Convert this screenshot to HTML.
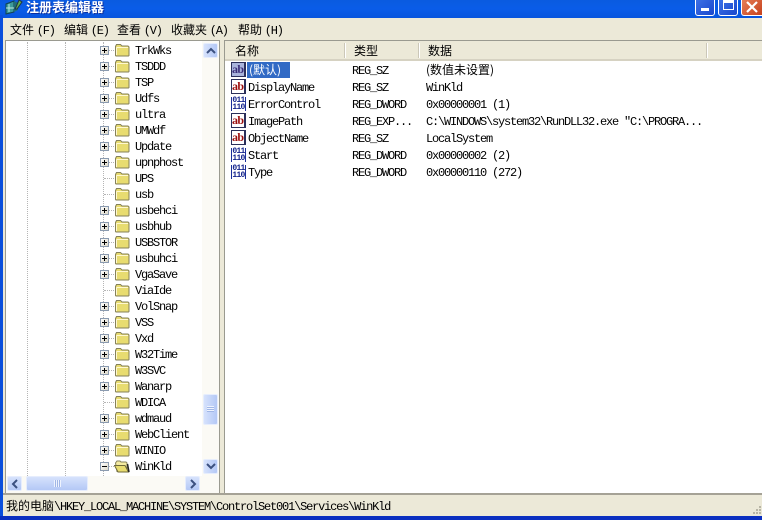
<!DOCTYPE html>
<html><head><meta charset="utf-8"><style>
html,body{margin:0;padding:0;width:762px;height:520px;overflow:hidden;background:#ece9d8}
body{position:relative;font-family:"Liberation Mono","Noto Sans CJK SC",monospace;font-size:12px;color:#000}
.a{position:absolute}
.t{position:absolute;white-space:pre;letter-spacing:-1.2px;line-height:14px;height:14px;transform:translateY(1px);font-size:12px}
.c{position:absolute;white-space:pre;font-family:"Noto Sans CJK SC",sans-serif;font-size:12px;line-height:16px}
.m{position:absolute;top:22px;white-space:pre;font-family:"Noto Sans CJK SC",sans-serif;font-size:12px;line-height:16px}
.m span{font-family:"Liberation Mono",monospace;font-size:12px;letter-spacing:-1.2px}
.p{position:absolute;left:100px;width:7px;height:7px;border:1px solid #8b9bb0;background:linear-gradient(135deg,#fff,#dcd8c8)}
.p:before{content:"";position:absolute;left:1px;top:3px;width:5px;height:1px;background:#000}
.p.x:after{content:"";position:absolute;left:3px;top:1px;width:1px;height:5px;background:#000}
.d{position:absolute;border-top:1px dotted #b5b5b5;height:0}
.v{position:absolute;border-left:1px dotted #b5b5b5;width:0}
.sb{position:absolute;border-radius:2px;background:linear-gradient(90deg,#d6e2fc,#b4c8f6);border:1px solid #e6edfd;box-sizing:border-box}
.sh{position:absolute;border-radius:2px;background:linear-gradient(#d6e2fc,#b4c8f6);border:1px solid #e6edfd;box-sizing:border-box}
.ab{position:absolute;left:231px;width:12px;height:13px;border:1px solid #2a2f5a;border-right-width:2px;background:#fff}
.ab b{position:absolute;left:0;top:0;font:bold 12px/12px "Liberation Serif",serif;color:#9c0f0f;letter-spacing:-.6px}
.bi{position:absolute;left:231px;width:13px;height:14px;background:#fff;border-left:1px solid #1b2f9a;border-right:1px solid #1b2f9a}
.bi b{position:absolute;left:0;width:13px;text-align:center;font:bold 8px/7px "Liberation Mono",monospace;color:#14248c;letter-spacing:-.7px}
</style></head><body>
<svg width="0" height="0" style="position:absolute"><defs>
<symbol id="f" viewBox="0 0 16 14"><path d="M1.5 3.5 L2.5 1.5 H6.5 L8 3 H14 L15 4 V12.5 L14.5 13 H2 L1.5 12.5 Z" fill="#e8dc70" stroke="#85815a"/><path d="M2.5 4.5 H14 M2.5 4.5 V12" fill="none" stroke="#fff8d0"/></symbol>
<symbol id="o" viewBox="0 0 16 14"><path d="M1.5 4 L3 2 H6 L7 3 H12 L13 4 V12.5 H3 Z" fill="#f4eaa0" stroke="#85815a"/><path d="M0.5 6.5 H11 L14.5 13 H4 Z" fill="#e8dc70" stroke="#6f6a3a"/><path d="M13.5 5 L15 13" stroke="#222" stroke-width="1.5"/></symbol>
</defs></svg>

<!-- title bar -->
<div class="a" style="left:0;top:0;width:762px;height:18px;background:linear-gradient(#0a5be0,#0a5ce8 50%,#0855dd)"></div>
<svg class="a" style="left:5px;top:0" width="18" height="15" viewBox="0 0 18 15"><path d="M1 4 L9 1 V12 L1 14 Z" fill="#3d9a9a" stroke="#12424f"/><path d="M9 1 L13 3 V10 L9 12 Z" fill="#1f6d78"/><path d="M4 4 V12 M1 8 H9" stroke="#bfe8e0"/><path d="M14 0 L17 2 L12 9 L10 9 L11 7 Z" fill="#5fb04f" stroke="#234"/></svg>
<div class="a" style="left:26px;top:-2px;font:bold 13px/18px 'Noto Sans CJK SC',sans-serif;color:#fff;text-shadow:1px 1px 0 #0a2fa0;white-space:pre">注册表编辑器</div>
<div class="a" style="left:695px;top:-4px;width:20px;height:20px;border:1px solid #fff;border-radius:3px;box-sizing:border-box;background:linear-gradient(135deg,#3f74e8,#1a47cc)"><div class="a" style="left:5px;top:11px;width:8px;height:3px;background:#fff"></div></div>
<div class="a" style="left:718px;top:-4px;width:20px;height:20px;border:1px solid #fff;border-radius:3px;box-sizing:border-box;background:linear-gradient(135deg,#3f74e8,#1a47cc)"><div class="a" style="left:4px;top:3px;width:11px;height:10px;border:1px solid #fff;border-top-width:3px;box-sizing:border-box"></div></div>
<div class="a" style="left:741px;top:-4px;width:21px;height:20px;border:1px solid #fff;border-right:0;border-radius:3px 0 0 3px;box-sizing:border-box;background:linear-gradient(135deg,#e8835c,#c6411c)"><svg class="a" style="left:4px;top:4px" width="12" height="12" viewBox="0 0 12 12"><path d="M1 1 L11 11 M11 1 L1 11" stroke="#fff" stroke-width="2.2"/></svg></div>

<!-- frame -->
<div class="a" style="left:0;top:15px;width:3px;height:505px;background:#0a4fdc"></div>
<div class="a" style="left:0;top:516px;width:762px;height:4px;background:#0a2fc0"></div>

<!-- menu -->
<div class="m" style="left:10px">文件 <span>(F)</span></div>
<div class="m" style="left:64px">编辑 <span>(E)</span></div>
<div class="m" style="left:117px">查看 <span>(V)</span></div>
<div class="m" style="left:171px">收藏夹 <span>(A)</span></div>
<div class="m" style="left:238px">帮助 <span>(H)</span></div>

<!-- tree panel -->
<div class="a" style="left:5px;top:40px;width:215px;height:454px;background:#fff;border:1px solid #9a9a90;box-sizing:border-box"></div>
<div class="v" style="left:27px;top:42px;height:434px"></div>
<div class="v" style="left:65px;top:42px;height:434px"></div>
<div class="v" style="left:103px;top:42px;height:434px"></div>

<div class="d" style="left:104px;top:50px;width:10px"></div><div class="p x" style="top:46px"></div><svg class="a" style="left:114px;top:43px" width="16" height="14"><use href="#f"/></svg><div class="t" style="left:135px;top:43px">TrkWks</div>
<div class="d" style="left:104px;top:66px;width:10px"></div><div class="p x" style="top:62px"></div><svg class="a" style="left:114px;top:59px" width="16" height="14"><use href="#f"/></svg><div class="t" style="left:135px;top:59px">TSDDD</div>
<div class="d" style="left:104px;top:82px;width:10px"></div><div class="p x" style="top:78px"></div><svg class="a" style="left:114px;top:75px" width="16" height="14"><use href="#f"/></svg><div class="t" style="left:135px;top:75px">TSP</div>
<div class="d" style="left:104px;top:98px;width:10px"></div><div class="p x" style="top:94px"></div><svg class="a" style="left:114px;top:91px" width="16" height="14"><use href="#f"/></svg><div class="t" style="left:135px;top:91px">Udfs</div>
<div class="d" style="left:104px;top:114px;width:10px"></div><div class="p x" style="top:110px"></div><svg class="a" style="left:114px;top:107px" width="16" height="14"><use href="#f"/></svg><div class="t" style="left:135px;top:107px">ultra</div>
<div class="d" style="left:104px;top:130px;width:10px"></div><div class="p x" style="top:126px"></div><svg class="a" style="left:114px;top:123px" width="16" height="14"><use href="#f"/></svg><div class="t" style="left:135px;top:123px">UMWdf</div>
<div class="d" style="left:104px;top:146px;width:10px"></div><div class="p x" style="top:142px"></div><svg class="a" style="left:114px;top:139px" width="16" height="14"><use href="#f"/></svg><div class="t" style="left:135px;top:139px">Update</div>
<div class="d" style="left:104px;top:162px;width:10px"></div><div class="p x" style="top:158px"></div><svg class="a" style="left:114px;top:155px" width="16" height="14"><use href="#f"/></svg><div class="t" style="left:135px;top:155px">upnphost</div>
<div class="d" style="left:104px;top:178px;width:10px"></div><svg class="a" style="left:114px;top:171px" width="16" height="14"><use href="#f"/></svg><div class="t" style="left:135px;top:171px">UPS</div>
<div class="d" style="left:104px;top:194px;width:10px"></div><svg class="a" style="left:114px;top:187px" width="16" height="14"><use href="#f"/></svg><div class="t" style="left:135px;top:187px">usb</div>
<div class="d" style="left:104px;top:210px;width:10px"></div><div class="p x" style="top:206px"></div><svg class="a" style="left:114px;top:203px" width="16" height="14"><use href="#f"/></svg><div class="t" style="left:135px;top:203px">usbehci</div>
<div class="d" style="left:104px;top:226px;width:10px"></div><div class="p x" style="top:222px"></div><svg class="a" style="left:114px;top:219px" width="16" height="14"><use href="#f"/></svg><div class="t" style="left:135px;top:219px">usbhub</div>
<div class="d" style="left:104px;top:242px;width:10px"></div><div class="p x" style="top:238px"></div><svg class="a" style="left:114px;top:235px" width="16" height="14"><use href="#f"/></svg><div class="t" style="left:135px;top:235px">USBSTOR</div>
<div class="d" style="left:104px;top:258px;width:10px"></div><div class="p x" style="top:254px"></div><svg class="a" style="left:114px;top:251px" width="16" height="14"><use href="#f"/></svg><div class="t" style="left:135px;top:251px">usbuhci</div>
<div class="d" style="left:104px;top:274px;width:10px"></div><div class="p x" style="top:270px"></div><svg class="a" style="left:114px;top:267px" width="16" height="14"><use href="#f"/></svg><div class="t" style="left:135px;top:267px">VgaSave</div>
<div class="d" style="left:104px;top:290px;width:10px"></div><svg class="a" style="left:114px;top:283px" width="16" height="14"><use href="#f"/></svg><div class="t" style="left:135px;top:283px">ViaIde</div>
<div class="d" style="left:104px;top:306px;width:10px"></div><div class="p x" style="top:302px"></div><svg class="a" style="left:114px;top:299px" width="16" height="14"><use href="#f"/></svg><div class="t" style="left:135px;top:299px">VolSnap</div>
<div class="d" style="left:104px;top:322px;width:10px"></div><div class="p x" style="top:318px"></div><svg class="a" style="left:114px;top:315px" width="16" height="14"><use href="#f"/></svg><div class="t" style="left:135px;top:315px">VSS</div>
<div class="d" style="left:104px;top:338px;width:10px"></div><div class="p x" style="top:334px"></div><svg class="a" style="left:114px;top:331px" width="16" height="14"><use href="#f"/></svg><div class="t" style="left:135px;top:331px">Vxd</div>
<div class="d" style="left:104px;top:354px;width:10px"></div><div class="p x" style="top:350px"></div><svg class="a" style="left:114px;top:347px" width="16" height="14"><use href="#f"/></svg><div class="t" style="left:135px;top:347px">W32Time</div>
<div class="d" style="left:104px;top:370px;width:10px"></div><div class="p x" style="top:366px"></div><svg class="a" style="left:114px;top:363px" width="16" height="14"><use href="#f"/></svg><div class="t" style="left:135px;top:363px">W3SVC</div>
<div class="d" style="left:104px;top:386px;width:10px"></div><div class="p x" style="top:382px"></div><svg class="a" style="left:114px;top:379px" width="16" height="14"><use href="#f"/></svg><div class="t" style="left:135px;top:379px">Wanarp</div>
<div class="d" style="left:104px;top:402px;width:10px"></div><svg class="a" style="left:114px;top:395px" width="16" height="14"><use href="#f"/></svg><div class="t" style="left:135px;top:395px">WDICA</div>
<div class="d" style="left:104px;top:418px;width:10px"></div><div class="p x" style="top:414px"></div><svg class="a" style="left:114px;top:411px" width="16" height="14"><use href="#f"/></svg><div class="t" style="left:135px;top:411px">wdmaud</div>
<div class="d" style="left:104px;top:434px;width:10px"></div><div class="p x" style="top:430px"></div><svg class="a" style="left:114px;top:427px" width="16" height="14"><use href="#f"/></svg><div class="t" style="left:135px;top:427px">WebClient</div>
<div class="d" style="left:104px;top:450px;width:10px"></div><div class="p x" style="top:446px"></div><svg class="a" style="left:114px;top:443px" width="16" height="14"><use href="#f"/></svg><div class="t" style="left:135px;top:443px">WINIO</div>
<div class="d" style="left:104px;top:466px;width:10px"></div><div class="p" style="top:462px"></div><svg class="a" style="left:114px;top:459px" width="16" height="14"><use href="#o"/></svg><div class="t" style="left:135px;top:459px">WinKld</div>

<!-- vertical scrollbar -->
<div class="a" style="left:202px;top:41px;width:17px;height:435px;background:#fbfaf5"></div>
<div class="sb" style="left:203px;top:43px;width:15px;height:15px"><svg class="a" style="left:2px;top:3px" width="10" height="7"><path d="M1 6 L5 2 L9 6" fill="none" stroke="#3c5180" stroke-width="2"/></svg></div>
<div class="sb" style="left:203px;top:394px;width:15px;height:31px"><div class="a" style="left:3px;top:11px;width:7px;height:6px;background:repeating-linear-gradient(#eef3fe 0 1px,#a0b6e6 1px 2px)"></div></div>
<div class="sb" style="left:203px;top:459px;width:15px;height:15px"><svg class="a" style="left:2px;top:3px" width="10" height="7"><path d="M1 1 L5 5 L9 1" fill="none" stroke="#3c5180" stroke-width="2"/></svg></div>

<!-- horizontal scrollbar -->
<div class="a" style="left:6px;top:476px;width:213px;height:17px;background:#fbfaf5"></div>
<div class="sh" style="left:7px;top:476px;width:15px;height:15px"><svg class="a" style="left:3px;top:2px" width="7" height="10"><path d="M6 1 L2 5 L6 9" fill="none" stroke="#3c5180" stroke-width="2"/></svg></div>
<div class="sh" style="left:26px;top:476px;width:62px;height:15px"><div class="a" style="left:27px;top:3px;width:7px;height:7px;background:repeating-linear-gradient(90deg,#eef3fe 0 1px,#a0b6e6 1px 2px)"></div></div>
<div class="sh" style="left:185px;top:476px;width:15px;height:15px"><svg class="a" style="left:4px;top:2px" width="7" height="10"><path d="M1 1 L5 5 L1 9" fill="none" stroke="#3c5180" stroke-width="2"/></svg></div>

<!-- right panel -->
<div class="a" style="left:224px;top:40px;width:538px;height:454px;background:#fff;border-left:1px solid #9a9a90;border-top:1px solid #9a9a90;box-sizing:border-box"></div>
<div class="a" style="left:225px;top:41px;width:537px;height:20px;background:#ece9d8;border-bottom:2px solid #d6d2c2;box-sizing:border-box"></div>
<div class="a" style="left:344px;top:43px;width:1px;height:15px;background:#cbc7b8;border-right:1px solid #fff"></div>
<div class="a" style="left:418px;top:43px;width:1px;height:15px;background:#cbc7b8;border-right:1px solid #fff"></div>
<div class="a" style="left:706px;top:43px;width:1px;height:15px;background:#cbc7b8;border-right:1px solid #fff"></div>
<div class="c" style="left:235px;top:43px">名称</div>
<div class="c" style="left:354px;top:43px">类型</div>
<div class="c" style="left:428px;top:43px">数据</div>

<div class="a" style="left:247px;top:62px;width:43px;height:16px;background:#316ac5"></div>
<div class="ab" style="top:62px;background:#a9b4dc"><b style="color:#3b2f7a">ab</b></div>
<div class="c" style="left:249px;top:62px;color:#fff">(默认)</div>
<div class="t" style="left:352px;top:63px">REG_SZ</div>
<div class="c" style="left:426px;top:62px">(数值未设置)</div>

<div class="ab" style="top:79px"><b>ab</b></div>
<div class="t" style="left:248px;top:80px">DisplayName</div>
<div class="t" style="left:352px;top:80px">REG_SZ</div>
<div class="t" style="left:426px;top:80px">WinKld</div>

<div class="bi" style="top:97px"><b style="top:0">011</b><b style="top:7px">110</b></div>
<div class="t" style="left:248px;top:97px">ErrorControl</div>
<div class="t" style="left:352px;top:97px">REG_DWORD</div>
<div class="t" style="left:426px;top:97px">0x00000001 (1)</div>

<div class="ab" style="top:113px"><b>ab</b></div>
<div class="t" style="left:248px;top:114px">ImagePath</div>
<div class="t" style="left:352px;top:114px">REG_EXP...</div>
<div class="t" style="left:426px;top:114px">C:\WINDOWS\system32\RunDLL32.exe "C:\PROGRA...</div>

<div class="ab" style="top:130px"><b>ab</b></div>
<div class="t" style="left:248px;top:131px">ObjectName</div>
<div class="t" style="left:352px;top:131px">REG_SZ</div>
<div class="t" style="left:426px;top:131px">LocalSystem</div>

<div class="bi" style="top:148px"><b style="top:0">011</b><b style="top:7px">110</b></div>
<div class="t" style="left:248px;top:148px">Start</div>
<div class="t" style="left:352px;top:148px">REG_DWORD</div>
<div class="t" style="left:426px;top:148px">0x00000002 (2)</div>

<div class="bi" style="top:165px"><b style="top:0">011</b><b style="top:7px">110</b></div>
<div class="t" style="left:248px;top:165px">Type</div>
<div class="t" style="left:352px;top:165px">REG_DWORD</div>
<div class="t" style="left:426px;top:165px">0x00000110 (272)</div>

<!-- status bar -->
<div class="a" style="left:3px;top:493px;width:759px;height:2px;background:#a5a296"></div>
<div class="c" style="left:6px;top:498px">我的电脑<span style="font-family:'Liberation Mono',monospace;font-size:12px;letter-spacing:-1.2px">\HKEY_LOCAL_MACHINE\SYSTEM\ControlSet001\Services\WinKld</span></div>
<svg class="a" style="left:753px;top:505px" width="9" height="11"><g fill="#b8b5a5"><rect x="6" y="1" width="2" height="2"/><rect x="3" y="4" width="2" height="2"/><rect x="6" y="4" width="2" height="2"/><rect x="0" y="7" width="2" height="2"/><rect x="3" y="7" width="2" height="2"/><rect x="6" y="7" width="2" height="2"/></g></svg>
</body></html>
